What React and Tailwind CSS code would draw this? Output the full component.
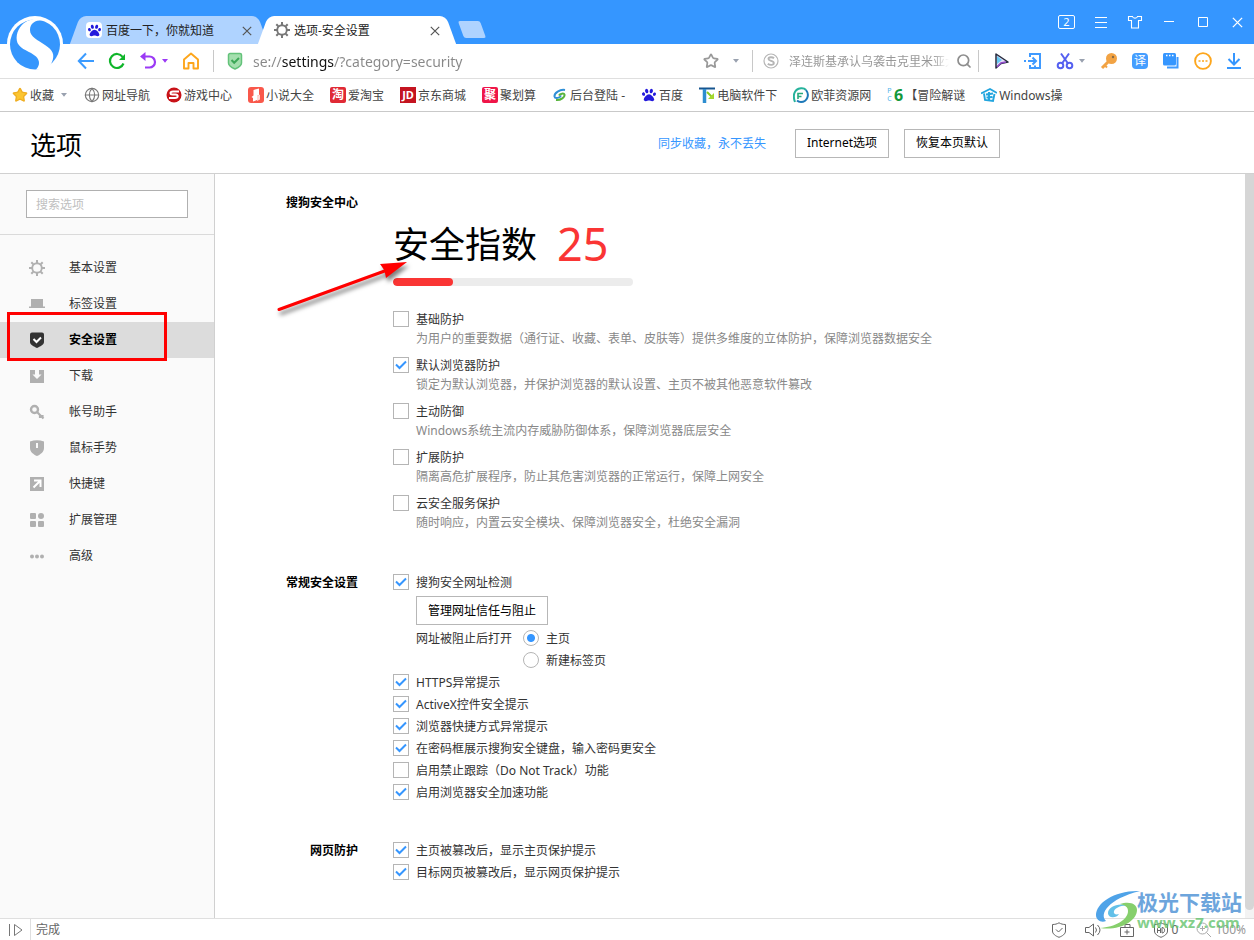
import React from 'react';
import { FaPaw } from 'react-icons/fa';
import { Globe, Search, Star } from 'lucide-react';

const Caret = ({ className = 'text-gray-400' }) => (
  <svg viewBox="0 0 8 5" className={`h-[5px] w-2 shrink-0 ${className}`} fill="currentColor">
    <path d="M1 0h6L4 3.700z" />
  </svg>
);

const Divider = () => <div className="h-[22px] w-px shrink-0 bg-[#c8c8c8]" />;

const CloseIcon = ({ size = 10 }) => (
  <svg width={size} height={size} viewBox="0 0 10 10" fill="none" stroke="currentColor" strokeWidth="1.2">
    <path d="M.8.8l8.4 8.4M9.2.8L.8 9.2" />
  </svg>
);

const GearIcon = ({ className }) => (
  <svg viewBox="0 0 16 16" className={`size-4 shrink-0 ${className}`} fill="none" stroke="currentColor">
    <circle cx="8" cy="8" r="4.8" strokeWidth="1.9" />
    <path
      strokeWidth="2"
      d="M8 0v3M8 13v3M0 8h3M13 8h3M2.3 2.3l2 2M11.7 11.7l2 2M2.3 13.7l2-2M11.7 4.3l2-2"
    />
  </svg>
);

const SogouLogo = () => (
  <svg viewBox="0 0 56 56" className="absolute top-4 left-[7px] z-10 size-14">
    <circle cx="28" cy="28" r="28" fill="#fff" />
    <circle cx="28" cy="28.500" r="25" fill="#3596fd" />
    <path
      fill="#fff"
      d="M40 4.500C30 3 23 6 23 14c0 7 8 10 15 15 8 5 10 10 7 17-2 4-4 6-7 8l-9-.5c4-4 4-9 0-13C23 35 14 34 10.500 27 8 20 11 12 17 7 24 2 34 1 40 4.500z"
    />
  </svg>
);

/* ---------- title bar ---------- */

function Tab({ icon, title, active }) {
  return (
    <div
      className={`relative isolate flex h-7 w-[188px] items-center gap-1 px-[11px] text-[#222] before:absolute before:inset-y-0 before:left-0 before:-z-10 before:w-2/3 before:skew-x-[-20deg] before:rounded-tl-md after:absolute after:inset-y-0 after:right-0 after:-z-10 after:w-2/3 after:skew-x-[20deg] after:rounded-tr-md ${
        active ? 'z-[1] before:bg-white after:bg-white' : 'before:bg-[#afd3ff] after:bg-[#afd3ff]'
      }`}
    >
      {icon}
      <button type="button" className="flex-1 truncate pt-0.5 text-left">{title}</button>
      <button type="button" aria-label="关闭标签" className="pt-0.5 text-[#555]">
        <CloseIcon />
      </button>
    </div>
  );
}

function TitleBar() {
  return (
    <div className="flex h-11 items-end bg-[#3596ff] pl-[75px]">
      <Tab
        title="百度一下，你就知道"
        icon={
          <span className="flex size-4 shrink-0 items-center justify-center rounded-sm bg-white text-[#2319dc]">
            <FaPaw size={13} />
          </span>
        }
      />
      <Tab active title="选项-安全设置" icon={<GearIcon className="text-[#777]" />} />
      <button
        type="button"
        aria-label="新建标签"
        className="mb-1.5 ml-2.5 h-[17px] w-[22px] skew-x-[20deg] rounded-xs bg-[#afd3ff]"
      />
      <div className="mb-3.5 ml-auto flex items-center gap-[18px] pr-[9px] text-white">
        <button type="button" className="h-3.5 w-[17px] rounded-xs border border-white text-[11px] leading-3">2</button>
        <button type="button" aria-label="菜单">
          <svg width="16" height="16" viewBox="0 0 16 16" stroke="currentColor" strokeWidth="1.1">
            <path d="M2 3.500h12M2 8.500h12M2 13.500h12" />
          </svg>
        </button>
        <button type="button" aria-label="皮肤">
          <svg width="16" height="16" viewBox="0 0 16 16" fill="none" stroke="currentColor" strokeWidth="1.1">
            <path d="M1.500 2.500h4c.5 2.200 4.500 2.200 5 0h4v4h-3v7.500h-7v-7.500h-3z" />
          </svg>
        </button>
        <button type="button" aria-label="最小化">
          <svg width="16" height="16" viewBox="0 0 16 16" stroke="currentColor">
            <path d="M3 7.500h10" />
          </svg>
        </button>
        <button type="button" aria-label="最大化">
          <svg width="16" height="16" viewBox="0 0 16 16" fill="none" stroke="currentColor">
            <path d="M3.500 3.500h9v9h-9z" />
          </svg>
        </button>
        <button type="button" aria-label="关闭" className="flex w-4 justify-center">
          <CloseIcon size={11} />
        </button>
      </div>
    </div>
  );
}

/* ---------- address bar ---------- */

function Toolbar() {
  return (
    <div className="flex h-[35px] items-center border-b border-[#dfdfdf] pr-3 pl-[77px]">
      <div className="flex items-center gap-[13px]">
        <button type="button" aria-label="后退">
          <svg width="18" height="18" viewBox="0 0 18 18" fill="none" stroke="#3b9bff" strokeWidth="2">
            <path d="M9 1.500L1.800 9 9 16.500M2 9h15" />
          </svg>
        </button>
        <button type="button" aria-label="刷新">
          <svg width="18" height="18" viewBox="0 0 18 18" fill="none" stroke="#0fb52a" strokeWidth="2.2">
            <path d="M15.500 11.500A7 7 0 1 1 14.600 4.800" />
            <path d="M17 2v6h-6z" fill="#0fb52a" stroke="none" />
          </svg>
        </button>
        <div className="flex items-center gap-1">
          <button type="button" aria-label="撤销">
            <svg width="18" height="18" viewBox="0 0 18 18" fill="none" stroke="#9b3af5" strokeWidth="2.2">
              <path d="M4 4.500h6.500a5.500 5.500 0 0 1 0 11H6" />
              <path d="M6.500 0v9L1 4.500z" fill="#9b3af5" stroke="none" />
            </svg>
          </button>
          <Caret className="text-[#9b3af5]" />
        </div>
        <button type="button" aria-label="主页">
          <svg width="18" height="18" viewBox="0 0 18 18" fill="none" stroke="#fda61c" strokeWidth="1.900">
            <path d="M2 7.500L9 1.500l7 6v9h-4.500V11h-5v5.500H2z" strokeLinejoin="round" />
          </svg>
        </button>
        <Divider />
        <svg width="16" height="18" viewBox="0 0 16 18" className="shrink-0">
          <path d="M3 1.500h10a1.500 1.500 0 0 1 1.500 1.500v8c0 3-3 4.500-6.500 6-3.500-1.500-6.500-3-6.500-6V3A1.500 1.500 0 0 1 3 1.500z" fill="#a4dfae" stroke="#63c27a" strokeWidth="1.500" />
          <path d="M4.500 8l2.700 2.800L12 6" fill="none" stroke="#3da858" strokeWidth="2" />
        </svg>
      </div>
      <input
        aria-label="地址"
        defaultValue="se://settings/?category=security"
        className="ml-[10px] min-w-0 flex-1 bg-[linear-gradient(to_right,#888_29px,#111_29px,#111_81px,#888_81px)] bg-clip-text pt-px text-sm text-transparent outline-none"
      />
      <button type="button" aria-label="收藏本页" className="mr-[13px] text-[#999]">
        <Star size={16} strokeWidth={2.6} />
      </button>
      <Caret />
      <div className="ml-[12px] flex items-center">
        <Divider />
        <svg width="16" height="16" viewBox="0 0 16 16" className="mx-[10px]" fill="none" stroke="#b5b5b5">
          <circle cx="8" cy="8" r="7" strokeWidth="1.200" />
          <path d="M11 5.300C9.500 3.900 5.500 3.800 5.500 6.100S10.800 7.500 10.800 10 6.500 12.300 4.800 10.700" strokeWidth="1.900" />
        </svg>
        <input
          aria-label="搜索"
          placeholder="泽连斯基承认乌袭击克里米亚大桥"
          className="w-40 [mask-image:linear-gradient(to_right,black_90%,transparent)] pt-px outline-none placeholder:text-[#999]"
        />
        <button type="button" aria-label="搜索" className="mr-[6px] ml-[7px] text-[#8e8e8e]">
          <Search size={16} strokeWidth={2.6} />
        </button>
        <Divider />
      </div>
      <div className="ml-[13px] flex items-center gap-[14px]">
        <svg width="18" height="18" viewBox="0 0 18 18">
          <path d="M4 2l12 8-7 1.500L4 16z" fill="#e6dcf7" stroke="#252a3c" strokeWidth="1.500" strokeLinejoin="round" />
          <path d="M5 4l5 4-5 4z" fill="#65c9f3" />
          <path d="M5 15l4-4 5-1" stroke="#8f4bc9" strokeWidth="1.400" fill="none" />
        </svg>
        <svg width="18" height="18" viewBox="0 0 18 18" fill="none" stroke="#3f9aff" strokeWidth="2">
          <path d="M6 5V2h10v14H6v-3M4 9h7M8.500 5.500L12 9l-3.500 3.500M0 9h2" />
          <path d="M10 14.500h2" />
        </svg>
        <div className="flex items-center gap-1">
          <svg width="18" height="18" viewBox="0 0 18 18" fill="none" stroke="#5560f0" strokeWidth="2">
            <circle cx="4.500" cy="13.500" r="2.800" />
            <circle cx="13.500" cy="13.500" r="2.800" />
            <path d="M6 11.500L13 1.500M12 11.500L5 1.500" />
          </svg>
          <Caret />
        </div>
        <svg width="18" height="18" viewBox="0 0 18 18">
          <path d="M8.500 9.500L2 16" stroke="#f2a344" strokeWidth="3" />
          <path d="M4.500 13l2.500 2.500" stroke="#f2a344" strokeWidth="2" />
          <circle cx="11.500" cy="6.500" r="5.500" fill="#f2a344" />
          <circle cx="13" cy="5" r="1.200" fill="#8a6a45" />
        </svg>
        <span className="flex size-4 items-center justify-center rounded-sm bg-[#459eff] text-white">译</span>
        <svg width="18" height="18" viewBox="0 0 18 18">
          <path d="M5 15.500h10.500V5" fill="none" stroke="#3f9aff" strokeWidth="2" />
          <rect x="1" y="1" width="13" height="12.500" rx="1.500" fill="#3596ff" />
          <path d="M4 3.500h8" stroke="#fff" strokeWidth="1.500" strokeDasharray="1.500 1.500" />
        </svg>
        <svg width="18" height="18" viewBox="0 0 18 18">
          <circle cx="9" cy="9" r="7.900" fill="none" stroke="#fda61c" strokeWidth="1.900" />
          <path d="M4.500 9h2M8 9h2M11.500 9h2" stroke="#fda61c" strokeWidth="1.700" />
        </svg>
        <svg width="16" height="18" viewBox="0 0 16 18" fill="none" stroke="#3596ff" strokeWidth="2">
          <path d="M8 1v11M2.500 7L8 12.500 13.500 7M1 16h14" />
        </svg>
      </div>
    </div>
  );
}

/* ---------- bookmarks ---------- */

const Tile = ({ className, children }) => (
  <span className={`flex size-4 shrink-0 items-center justify-center font-bold text-white ${className}`}>{children}</span>
);

const BOOKMARKS = [
  { label: '网址导航', icon: <Globe size={16} strokeWidth={1.7} className="text-[#777]" /> },
  {
    label: '游戏中心',
    icon: (
      <svg width="16" height="16" viewBox="0 0 16 16">
        <circle cx="8" cy="8" r="7.500" fill="#c81218" />
        <path d="M13 4.500H7C3.500 4.500 4 7.500 6.500 7.500h3c3 0 3 3.500-.5 3.500H3" fill="none" stroke="#fff" strokeWidth="2" />
      </svg>
    ),
  },
  {
    label: '小说大全',
    icon: (
      <svg width="16" height="16" viewBox="0 0 16 16">
        <rect width="16" height="16" rx="3" fill="#f9584b" />
        <path d="M5.500 3l5.500-1.500V8l-2 1v4l-4 1.500V11l-1.500-1 2-1.500z" fill="#fff" />
        <path d="M9 9l3-1.500v5L9 14z" fill="#ffd9d5" />
      </svg>
    ),
  },
  { label: '爱淘宝', icon: <Tile className="rounded-xs bg-[#e02a35]">淘</Tile> },
  { label: '京东商城', icon: <Tile className="bg-[#c41420] text-[11px]">JD</Tile> },
  { label: '聚划算', icon: <Tile className="rounded-xs bg-[#ef1548]">聚</Tile> },
  {
    label: '后台登陆 -',
    icon: (
      <svg width="16" height="16" viewBox="0 0 16 16" fill="none" strokeWidth="2">
        <path d="M13 3C8 2 2 6 2.500 9.500 3 12 8 11 9 8.500" stroke="#2f8fd6" />
        <path d="M4 13c5 .5 9-3 8.500-5.500C12 6 8 6.500 7 8.500" stroke="#58b43c" />
      </svg>
    ),
  },
  { label: '百度', icon: <FaPaw size={14} className="mx-px text-[#2319dc]" /> },
  {
    label: '电脑软件下',
    icon: (
      <svg width="16" height="16" viewBox="0 0 16 16" fill="none">
        <path d="M0 1.500h16" stroke="#16558f" strokeWidth="2" />
        <path d="M5.500 2v14" stroke="#2d8ed0" strokeWidth="3.500" />
        <path d="M8 5l6 6" stroke="#8acb22" strokeWidth="2" />
        <path d="M15 6v6H9z" fill="#a5d82e" />
      </svg>
    ),
  },
  {
    label: '欧菲资源网',
    icon: (
      <svg width="16" height="16" viewBox="0 0 16 16" fill="none">
        <path d="M2 15C0 10 0 2 8 1.200c2-.2 4 .6 5 1.800" stroke="#25b29b" strokeWidth="2" />
        <path d="M13 3c4 5 1 12-5 12-2 0-3-.5-4-1.500" stroke="#1c78b8" strokeWidth="2" />
        <path d="M5 12V6.500h5M5 9.500h3.500" stroke="#27a87c" strokeWidth="1.600" />
      </svg>
    ),
  },
  {
    label: '【冒险解谜',
    icon: (
      <span className="flex size-4 shrink-0 items-center gap-px">
        <span className="flex w-1.5 flex-col text-[7px] leading-[8px] text-[#4fb4ea]">
          <span>P</span>
          <span>C</span>
        </span>
        <b className="text-base leading-4 text-[#12983a]">6</b>
      </span>
    ),
  },
  {
    label: 'Windows操',
    icon: (
      <svg width="16" height="16" viewBox="0 0 16 16" fill="none" stroke="#22a5de" strokeWidth="1.900">
        <path d="M0 6.500L9 2l7 4M3 6.500l1 6.500 8 1 1.500-7M5 7.500l7-1M5.500 10.500l6-.5M8 5v8" />
      </svg>
    ),
  },
];

function BookmarkBar() {
  return (
    <nav className="flex h-[33px] items-center gap-4 overflow-hidden border-b border-[#c9c9c9] pl-3 whitespace-nowrap text-[#444]">
      <button type="button" className="flex items-center gap-0.5">
        <Star size={16} fill="#fbc531" stroke="#efae22" />
        <span className="pt-px">收藏</span>
        <span className="ml-1">
          <Caret />
        </span>
      </button>
      {BOOKMARKS.map((b) => (
        <a key={b.label} href="#" className="flex items-center gap-0.5">
          {b.icon}
          <span className="pt-0.5">{b.label}</span>
        </a>
      ))}
    </nav>
  );
}

/* ---------- settings ---------- */

const Button = ({ children }) => (
  <button type="button" className="h-[29px] border border-[#b7b7b7] bg-white px-[11px] text-black">
    {children}
  </button>
);

const NAV = [
  { label: '基本设置', icon: <GearIcon className="text-[#b0b0b0]" /> },
  { label: '标签设置', icon: <path d="M2 3h12v7.500h2V12H0v-1.500h2z" /> },
  {
    label: '安全设置',
    active: true,
    icon: (
      <>
        <path d="M3 .5h10A2 2 0 0 1 15 2.500V10c0 3-4 4.500-7 6-3-1.500-7-3-7-6V2.500A2 2 0 0 1 3 .5z" fill="#333" />
        <path d="M4.500 7l3 3 4.500-4.500" fill="none" stroke="#fff" strokeWidth="2" />
      </>
    ),
  },
  { label: '下载', icon: <path d="M1 2h5v4.500H3.500L8 11l4.500-4.500H10V2h5v13H1z" /> },
  {
    label: '帐号助手',
    icon: (
      <g fill="none" stroke="#b0b0b0">
        <circle cx="5.500" cy="5.500" r="3.500" strokeWidth="2.400" />
        <path d="M8 8l6.500 6.500M11 11v3M13.500 11v2" strokeWidth="2.200" />
      </g>
    ),
  },
  { label: '鼠标手势', icon: <path d="M1 1.500Q8-1 15 1.500V8c0 4-3.500 6.500-7 8-3.500-1.500-7-4-7-8zM7 3v5h2V3z" fillRule="evenodd" /> },
  {
    label: '快捷键',
    icon: (
      <>
        <path d="M1 1h14v14H1z" />
        <path d="M4.500 11.500L11 5M5 4.500h6.500V11" fill="none" stroke="#fff" strokeWidth="2" />
      </>
    ),
  },
  {
    label: '扩展管理',
    icon: (
      <>
        <rect x="1" y="1" width="6" height="6" rx="1" />
        <circle cx="12" cy="4" r="3" />
        <rect x="1" y="9" width="6" height="6" rx="1" />
        <rect x="9" y="9" width="6" height="6" rx="1" />
      </>
    ),
  },
  {
    label: '高级',
    icon: (
      <>
        <circle cx="3" cy="8.500" r="2" />
        <circle cx="8" cy="8.500" r="2" />
        <circle cx="13" cy="8.500" r="2" />
      </>
    ),
  },
];

function Sidebar() {
  return (
    <aside className="w-[215px] shrink-0 border-r border-[#d0d0d0] bg-[#fafafa]">
      <div className="border-b border-[#dadada] px-[26px] py-4">
        <input
          aria-label="搜索选项"
          placeholder="搜索选项"
          className="block h-7 w-full border border-[#b0b0b0] bg-white px-[9px] outline-none placeholder:text-[#c0c0c0]"
        />
      </div>
      <nav className="pt-[15px]">
        {NAV.map((item) => (
          <a
            key={item.label}
            href="#"
            className={`relative flex h-9 items-center gap-6 pl-[29px] ${
              item.active ? 'bg-[#dcdcdc] font-bold text-black' : 'text-[#333]'
            }`}
          >
            <svg viewBox="0 0 16 16" className="size-4 shrink-0" fill="#b0b0b0">
              {item.icon}
            </svg>
            {item.label}
            {item.active && (
              <span className="absolute -top-2.5 left-[7px] h-[49px] w-40 border-3 border-[#f00]" />
            )}
          </a>
        ))}
      </nav>
    </aside>
  );
}

function Check({ label, note, checked }) {
  return (
    <div className={note ? 'mb-1.5' : ''}>
      <label className="flex h-[22px] w-fit items-center gap-[7px]">
        <span className="grid size-4 shrink-0 place-items-center">
          <input
            type="checkbox"
            defaultChecked={checked}
            className="peer col-start-1 row-start-1 size-4 appearance-none border border-[#b5b5b5] bg-white"
          />
          <svg
            viewBox="0 0 12 10"
            className="pointer-events-none invisible col-start-1 row-start-1 h-2.5 w-3 peer-checked:visible"
            fill="none"
            stroke="#3596ff"
            strokeWidth="2"
          >
            <path d="M1 4.500l3.500 3.500L11 1.500" />
          </svg>
        </span>
        <span className="pt-0.5">{label}</span>
      </label>
      {note && <p className="pl-[23px] leading-[18px] text-[#888]">{note}</p>}
    </div>
  );
}

const Radio = ({ label, checked }) => (
  <label className="flex h-[22px] items-center gap-[7px]">
    <input
      type="radio"
      name="blocked"
      defaultChecked={checked}
      className="size-4 shrink-0 appearance-none rounded-full border border-[#b5b5b5] bg-white checked:bg-[radial-gradient(circle,#3596ff_3.5px,#fff_4.5px)]"
    />
    <span className="pt-0.5">{label}</span>
  </label>
);

function Section({ title, className = '', children }) {
  return (
    <section className={`flex gap-[35px] ${className}`}>
      <h2 className="w-[143px] shrink-0 text-right leading-6 font-bold text-black">{title}</h2>
      <div className="min-w-0">{children}</div>
    </section>
  );
}

const PROTECTION = [
  { label: '基础防护', note: '为用户的重要数据（通行证、收藏、表单、皮肤等）提供多维度的立体防护，保障浏览器数据安全' },
  { label: '默认浏览器防护', note: '锁定为默认浏览器，并保护浏览器的默认设置、主页不被其他恶意软件篡改', checked: true },
  { label: '主动防御', note: 'Windows系统主流内存威胁防御体系，保障浏览器底层安全' },
  { label: '扩展防护', note: '隔离高危扩展程序，防止其危害浏览器的正常运行，保障上网安全' },
  { label: '云安全服务保护', note: '随时响应，内置云安全模块、保障浏览器安全，杜绝安全漏洞' },
];

const GENERAL = [
  { label: 'HTTPS异常提示', checked: true },
  { label: 'ActiveX控件安全提示', checked: true },
  { label: '浏览器快捷方式异常提示', checked: true },
  { label: '在密码框展示搜狗安全键盘，输入密码更安全', checked: true },
  { label: '启用禁止跟踪（Do Not Track）功能' },
  { label: '启用浏览器安全加速功能', checked: true },
];

function SecuritySettings({ score = 25 }) {
  return (
    <main className="relative min-w-0 flex-1 pt-[17px] text-[#333]">
      <Section title="搜狗安全中心">
        <div className="mt-[30px] flex h-12 items-center gap-5 text-4xl text-black">
          安全指数
          <span className="pb-1 text-[45px] leading-none text-[#fa3534]">{score}</span>
        </div>
        <div className="mt-[9px] mb-[22px] h-2 w-60 overflow-hidden rounded-full bg-[#ececec]">
          <div className="h-full rounded-full bg-[#fa3534]" style={{ width: `${score}%` }} />
        </div>
        {PROTECTION.map((p) => (
          <Check key={p.label} {...p} />
        ))}
      </Section>

      <Section title="常规安全设置" className="mt-[33px]">
        <Check label="搜狗安全网址检测" checked />
        <div className="pl-[23px]">
          <div className="pt-[3px] pb-0.5">
            <Button>管理网址信任与阻止</Button>
          </div>
          <div className="flex gap-[11px]">
            <span className="leading-6">网址被阻止后打开</span>
            <div>
              <Radio label="主页" checked />
              <Radio label="新建标签页" />
            </div>
          </div>
        </div>
        {GENERAL.map((g) => (
          <Check key={g.label} {...g} />
        ))}
      </Section>

      <Section title="网页防护" className="mt-9 mb-8">
        <Check label="主页被篡改后，显示主页保护提示" checked />
        <Check label="目标网页被篡改后，显示网页保护提示" checked />
      </Section>

      <svg viewBox="0 0 140 60" className="absolute top-[82px] left-[59px] h-[60px] w-[140px] drop-shadow-[2px_4px_2px_rgba(0,0,0,0.5)]">
        <path d="M5 53.500L112 14.500" stroke="#f00" strokeWidth="3" strokeLinecap="round" />
        <path d="M133 6L106 8l4.500 6.500L112 22z" fill="#f00" />
      </svg>
    </main>
  );
}

/* ---------- status bar ---------- */

function StatusBar() {
  return (
    <footer className="relative flex h-[22px] items-center border-t border-[#dfdfdf] bg-white text-[#666]">
      <svg width="14" height="14" viewBox="0 0 14 14" className="mr-[7px] ml-[9px]" fill="none" stroke="#777">
        <path d="M.5 1v12M5.500 1.500v11L13 7z" />
      </svg>
      <div className="mr-[5px] h-full w-px bg-[#dfdfdf]" />
      完成
      <div className="ml-auto flex items-center gap-[18px] pr-2">
        <svg width="16" height="16" viewBox="0 0 16 16" fill="none" stroke="#666">
          <path d="M8 .8C6 2 4 2.500 1.500 2.500V9c0 3 3 5 6.500 6.300C11.500 14 14.500 12 14.500 9V2.500C12 2.500 10 2 8 .8zM5 7.500l2.500 2.500L11.500 6" />
        </svg>
        <svg width="16" height="16" viewBox="0 0 16 16" fill="none" stroke="#666">
          <path d="M.5 5.500v5H4L8.500 14V2L4 5.500zM10.500 5.500q2 2.500 0 5M12.500 3q5 5 0 10" />
        </svg>
        <svg width="16" height="16" viewBox="0 0 16 16" fill="none" stroke="#666">
          <path d="M1.500 5.500h13v9h-13zM6 5V2.500h5V5M8 7.500v5M5.500 10h5" />
        </svg>
        <span className="flex items-center gap-[3px]">
          <svg width="16" height="16" viewBox="0 0 16 16" fill="none" stroke="#666">
            <path d="M8 .8C6 2 4 2.500 1.500 2.500V9c0 3 3 5 6.500 6.300C11.500 14 14.500 12 14.500 9V2.500C12 2.500 10 2 8 .8z" />
            <path d="M4.500 11V6.500L6 5l1.500 1.500V11M4.500 8.500h3M9 5.500V11c3.500 0 3.500-5.500 0-5.500z" />
          </svg>
          0
        </span>
        <span className="flex items-center gap-[3px] text-[#999]">
          <svg width="16" height="16" viewBox="0 0 16 16" fill="none" stroke="#aaa">
            <path d="M6.500 1a5.500 5.500 0 1 0 0 11 5.500 5.500 0 0 0 0-11zM10.500 10.500L15 15M4 6.500h5M6.500 4v5" />
          </svg>
          100%
        </span>
      </div>

      <div className="pointer-events-none absolute right-3 bottom-2 flex items-end font-bold whitespace-nowrap">
        <svg width="46" height="42" viewBox="0 0 46 42">
          <path d="M45 1C20 0 1 13 1 25c0 5 5 8 10 6C4 24 13 9 45 1z" fill="#4fa3e8" />
          <path d="M33 16c-9-4-20 1-20 7 0 5 8 6 11 1-3 1-6 0-5-3 2-4 8-6 14-5z" fill="#63c0e8" />
          <path d="M25 14c10-3 17 0 17 6C42 31 25 41 5 38c15-1 28-8 28-17 0-4-3-6-8-7z" fill="#86cf6c" />
        </svg>
        <span className="-ml-1 flex flex-col">
          <span className="text-[21px] leading-5 text-[#6da5dc]">极光下载站</span>
          <span className="text-[15px] leading-5 text-[#62c26b]/80">www.xz7.com</span>
        </span>
      </div>
    </footer>
  );
}

export default function App() {
  return (
    <div className="relative flex min-h-screen flex-col bg-white font-['Noto_Sans','Noto_Sans_CJK_SC',sans-serif] text-xs">
      <SogouLogo />
      <TitleBar />
      <Toolbar />
      <BookmarkBar />
      <header className="h-[62px] border-b border-[#d0d0d0]">
        <div className="flex h-full max-w-[1000px] items-center pl-[30px]">
          <h1 className="mr-auto pt-1 text-[26px] leading-8 text-black">选项</h1>
          <a href="#" className="mr-[29px] pt-0.5 text-[#3596ff]">同步收藏，永不丢失</a>
          <div className="flex gap-[15px] pt-px">
            <Button>Internet选项</Button>
            <Button>恢复本页默认</Button>
          </div>
        </div>
      </header>
      <div className="flex flex-1">
        <Sidebar />
        <SecuritySettings />
        <div className="flex w-[9px] shrink-0 bg-[#f3f3f3] pb-2">
          <div className="flex-1 rounded-b-full bg-[#d6d6d6]" />
        </div>
      </div>
      <StatusBar />
    </div>
  );
}
